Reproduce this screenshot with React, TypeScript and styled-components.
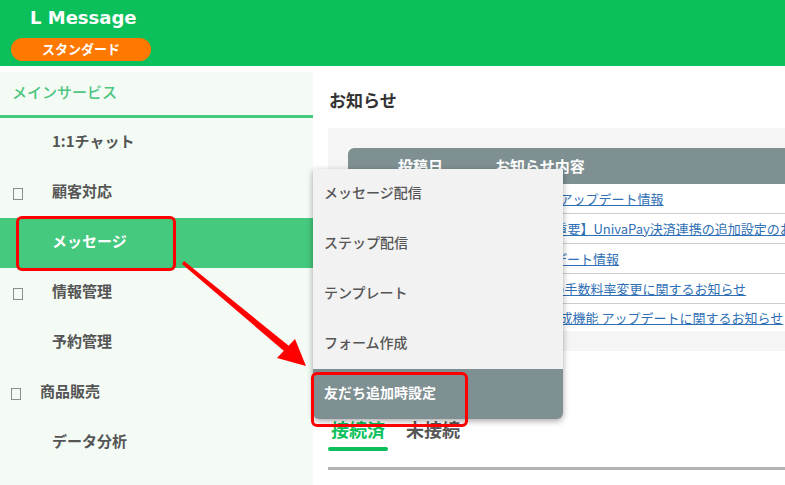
import React from 'react';
import styled, { createGlobalStyle } from 'styled-components';

// お知らせ画面 + メッセージメニュー

const GlobalStyle = createGlobalStyle`
	html, body {
		margin: 0;
		padding: 0;
		background: #fff;
		font-family: "Noto Sans CJK JP", "Noto Sans", sans-serif;
		overflow: hidden;
	}
	* {
		box-sizing: border-box;
	}
`;

const navItems = [
	{ label: '1:1チャット', icon: false, indent: 52 },
	{ label: '顧客対応', icon: true, indent: 52 },
	{ label: 'メッセージ', icon: false, indent: 52, active: true },
	{ label: '情報管理', icon: true, indent: 52 },
	{ label: '予約管理', icon: false, indent: 52 },
	{ label: '商品販売', icon: true, indent: 40, iconLeft: 11 },
	{ label: 'データ分析', icon: false, indent: 52 },
];

const subMenu = ['メッセージ配信', 'ステップ配信', 'テンプレート', 'フォーム作成', '友だち追加時設定'];

const notices = [
	{ date: '2024/06/20', title: 'カレンダーアップデート情報' },
	{ date: '2024/06/12', title: '再告知 -【重要】UnivaPay決済連携の追加設定のお願い' },
	{ date: '2024/06/05', title: 'APIアップデート情報' },
	{ date: '2024/05/28', title: 'UnivaPayの手数料率変更に関するお知らせ' },
	{ date: '2024/05/15', title: 'フォーム作成機能 アップデートに関するお知らせ' },
];

const App = () => {
	return (
		<React.Fragment>
			<GlobalStyle />
			<Page>
				<Header>
					<Logo>L Message</Logo>
					<PlanBadge>スタンダード</PlanBadge>
				</Header>
				<Body>
					<Sidebar>
						<SectionTitle>メインサービス</SectionTitle>
						{navItems.map((item) => (
							<NavItem key={item.label} $active={!!item.active} $indent={item.indent}>
								{item.icon && <IconBox $left={item.iconLeft ?? 13} />}
								{item.label}
							</NavItem>
						))}
					</Sidebar>
					<Main>
						<PageTitle>お知らせ</PageTitle>
						<NoticePanel>
							<NoticeTable>
								<thead>
									<tr>
										<DateHead>投稿日</DateHead>
										<TitleHead>お知らせ内容</TitleHead>
									</tr>
								</thead>
								<tbody>
									{notices.map((n) => (
										<tr key={n.title}>
											<DateCell>{n.date}</DateCell>
											<TitleCell>
												<NoticeLink href="#">{n.title}</NoticeLink>
											</TitleCell>
										</tr>
									))}
								</tbody>
							</NoticeTable>
						</NoticePanel>
						<Tabs>
							<Tab $active>接続済</Tab>
							<Tab>未接続</Tab>
						</Tabs>
						<Divider />
					</Main>
					<Dropdown>
						{subMenu.map((label, i) => (
							<DropItem key={label} $active={i === subMenu.length - 1}>
								{label}
							</DropItem>
						))}
					</Dropdown>
				</Body>
				<Arrow viewBox="0 0 785 485" width="785" height="485">
					<polygon points="182,264 184,261 289,346 284,351" fill="#ff0000" />
					<polygon points="306,366 277,358 295,339" fill="#ff0000" />
				</Arrow>
			</Page>
		</React.Fragment>
	);
};

export default App;

const Page = styled.div`
	position: relative;
	width: 785px;
	height: 485px;
	overflow: hidden;
`;

const Header = styled.header`
	height: 66px;
	background: #0bbf5b;
	padding: 8px 11px 0;
	display: flex;
	flex-direction: column;
	align-items: flex-start;
`;

const Logo = styled.div`
	font-family: "DejaVu Sans", "Noto Sans", sans-serif;
	font-weight: bold;
	font-size: 18px;
	line-height: 20px;
	color: #fff;
	margin-left: 19px;
`;

const PlanBadge = styled.div`
	margin-top: 10px;
	width: 140px;
	height: 23px;
	border-radius: 12px;
	background: #ff7800;
	color: #fff;
	font-weight: bold;
	font-size: 13px;
	padding-bottom: 2px;
	display: flex;
	align-items: center;
	justify-content: center;
`;

const Body = styled.div`
	position: relative;
	display: flex;
	margin-top: 6px;
	height: 413px;
`;

const Sidebar = styled.nav`
	width: 313px;
	flex-shrink: 0;
	background: #f3fbf4;
`;

const SectionTitle = styled.div`
	height: 46px;
	padding: 0 0 5px 12px;
	display: flex;
	align-items: center;
	color: #4cc57e;
	font-size: 15px;
	font-weight: 500;
	border-bottom: 3px solid #45c97e;
`;

const NavItem = styled.div<{ $active: boolean; $indent: number }>`
	position: relative;
	height: 50px;
	display: flex;
	align-items: center;
	padding: 0 0 5px ${(p) => p.$indent}px;
	font-size: 15px;
	font-weight: bold;
	color: ${(p) => (p.$active ? '#fff' : '#555')};
	background: ${(p) => (p.$active ? '#45c97e' : 'transparent')};

	${(p) =>
		p.$active &&
		`
		&::after {
			content: '';
			position: absolute;
			left: 16px;
			top: -2px;
			width: 154px;
			height: 49px;
			border: 3px solid #ff0000;
			border-radius: 6px;
		}
	`}
`;

const IconBox = styled.span<{ $left: number }>`
	position: absolute;
	left: ${(p) => p.$left}px;
	top: 20px;
	width: 10px;
	height: 12px;
	border: 1px solid #8a8f90;
`;

const Main = styled.main`
	flex: 1;
	min-width: 0;
	padding: 16px 0 0 15px;
`;

const PageTitle = styled.h1`
	margin: 0 0 16px 1px;
	font-size: 17px;
	line-height: 24px;
	font-weight: bold;
	color: #333;
`;

const NoticePanel = styled.div`
	background: #f5f5f5;
	padding: 20px 0 20px 20px;
	width: 520px;
`;

const NoticeTable = styled.table`
	width: 100%;
	border-collapse: separate;
	border-spacing: 0;
	background: #fff;
	white-space: nowrap;
	table-layout: fixed;
`;

const DateHead = styled.th`
	width: 147px;
	height: 36px;
	background: #7f9092;
	border-top-left-radius: 6px;
	color: #fff;
	font-size: 15px;
	font-weight: bold;
	text-align: left;
	padding: 0 0 2px 50px;
`;

const TitleHead = styled.th`
	background: #7f9092;
	color: #fff;
	font-size: 15px;
	font-weight: bold;
	text-align: left;
	padding: 0 0 2px;
`;

const DateCell = styled.td`
	height: 30px;
	padding: 0 0 3px 50px;
	font-size: 13px;
	color: #555;
	border-bottom: 1px solid #cccccc;
	tr:last-child & {
		border-bottom: none;
		height: 27px;
	}
`;

const TitleCell = styled.td`
	padding: 0 0 3px;
	overflow: hidden;
	border-bottom: 1px solid #cccccc;
	tr:last-child & {
		border-bottom: none;
	}
`;

const NoticeLink = styled.a`
	font-size: 13px;
	color: #2f6fb5;
	text-decoration: underline;
`;

const Tabs = styled.div`
	display: flex;
	gap: 15px;
	margin-top: 67px;
`;

const Tab = styled.div<{ $active?: boolean }>`
	padding: 0 3px;
	font-size: 18px;
	line-height: 22px;
	font-weight: bold;
	color: ${(p) => (p.$active ? '#0bbf5b' : '#555')};

	&::after {
		content: '';
		display: block;
		margin: 7px -3px 0;
		height: 4px;
		border-radius: 2px;
		background: ${(p) => (p.$active ? '#0bbf5b' : 'transparent')};
	}
`;

const Divider = styled.div`
	margin-top: 16px;
	height: 3px;
	background: #b3b3b3;
`;

const Dropdown = styled.div`
	position: absolute;
	left: 313px;
	top: 97px;
	width: 250px;
	background: #f2f2f2;
	border-radius: 0 0 6px 6px;
	box-shadow: 0 2px 6px rgba(0, 0, 0, 0.35);
`;

const DropItem = styled.div<{ $active: boolean }>`
	position: relative;
	height: 50px;
	display: flex;
	align-items: center;
	padding: 0 0 5px 11px;
	font-size: 14px;
	font-weight: ${(p) => (p.$active ? 'bold' : 500)};
	color: ${(p) => (p.$active ? '#fff' : '#555')};
	background: ${(p) => (p.$active ? '#7f9092' : 'transparent')};
	border-radius: ${(p) => (p.$active ? '0 0 6px 6px' : '0')};

	${(p) =>
		p.$active &&
		`
		&::after {
			content: '';
			position: absolute;
			left: -2px;
			top: 3px;
			width: 151px;
			height: 49px;
			border: 3px solid #ff0000;
			border-radius: 6px;
		}
	`}
`;

const Arrow = styled.svg`
	position: absolute;
	left: 0;
	top: 0;
	pointer-events: none;
`;
